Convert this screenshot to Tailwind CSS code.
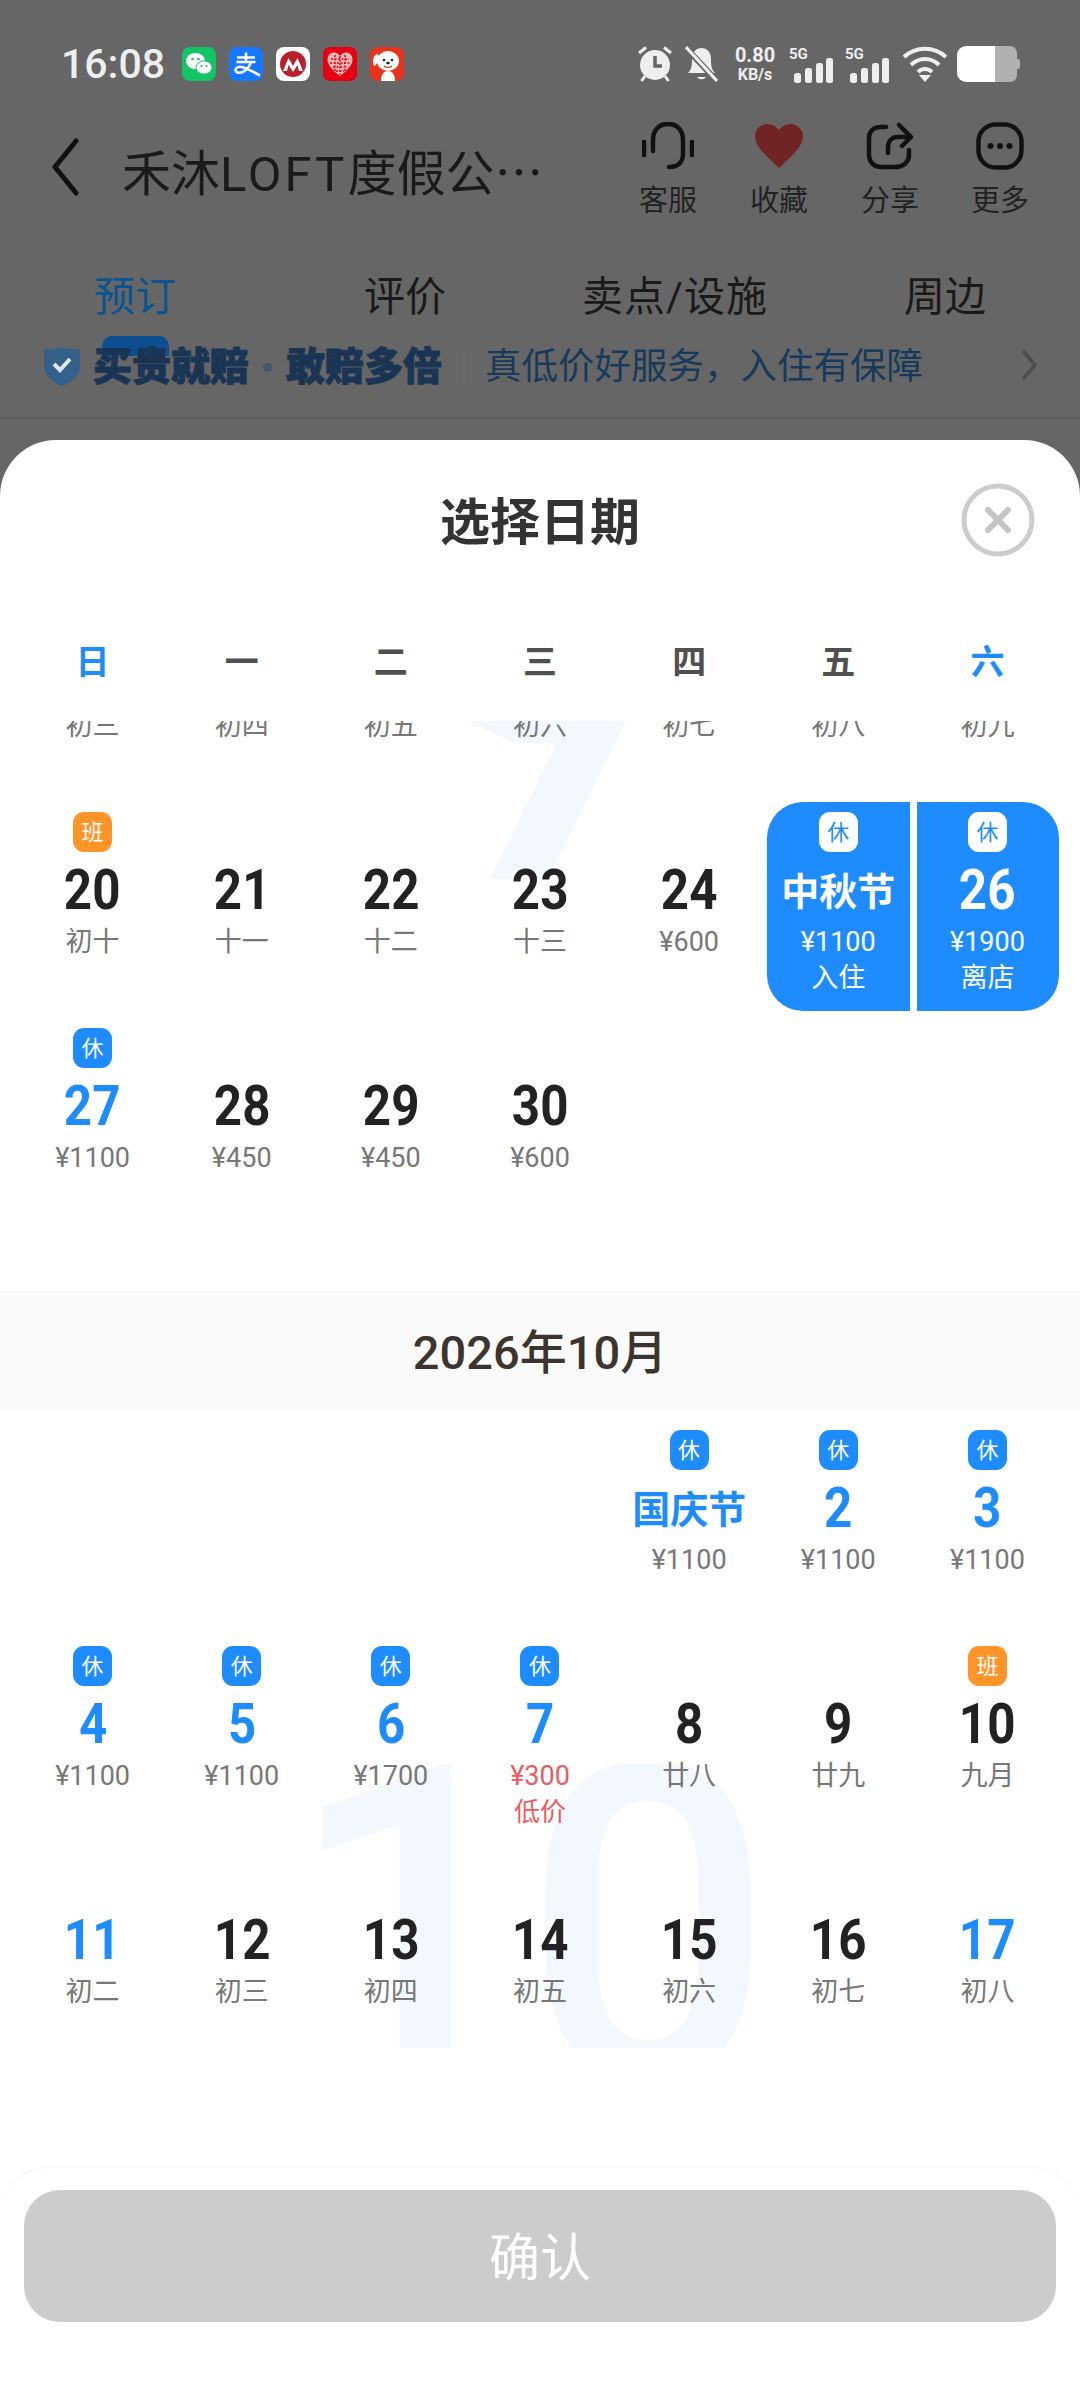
<!DOCTYPE html>
<html lang="zh-CN">
<head>
<meta charset="UTF-8">
<meta name="viewport" content="width=device-width, initial-scale=1.0">
<title>选择日期</title>
<script src="https://cdn.jsdelivr.net/npm/@tailwindcss/browser@4"></script>
</head>
<body class="w-[1080px] h-[2400px] overflow-hidden bg-[#666666] font-['Roboto','Noto_Sans_CJK_SC',sans-serif]">

<!-- page behind the sheet -->
<div class="h-[440px] flex flex-col">
  <!-- status bar -->
  <div class="h-[100px] pt-[46px] pl-[61px] flex items-start text-[#eeeeee]">
    <span class="w-[121px] h-9 leading-9 text-[41px] font-medium">16:08</span>
    <div class="flex gap-[13px] mt-px">
      <svg class="w-[34px] h-[34px]" viewBox="0 0 34 34"><rect width="34" height="34" rx="8" fill="#12c463"/><ellipse cx="13.5" cy="14" rx="9.5" ry="8" fill="#fff"/><ellipse cx="22" cy="20.5" rx="8" ry="6.6" fill="#fff" stroke="#12c463"/><circle cx="10.5" cy="12" r="1.3" fill="#12c463"/><circle cx="16.5" cy="12" r="1.3" fill="#12c463"/><circle cx="19.5" cy="19" r="1.1" fill="#12c463"/><circle cx="24.5" cy="19" r="1.1" fill="#12c463"/></svg>
      <svg class="w-[34px] h-[34px]" viewBox="0 0 34 34"><rect width="34" height="34" rx="8" fill="#1677ff"/><path d="M8 10.5H26M17 5.5V14M7.5 15H26.5M22 15C20 22 13 27 8.5 25.5C4.5 24 7 18.5 13 20C18 21.2 24 25 31 28.5" fill="none" stroke="#fff" stroke-width="2.6"/></svg>
      <svg class="w-[34px] h-[34px]" viewBox="0 0 34 34"><rect width="34" height="34" rx="8" fill="#fff"/><circle cx="17" cy="17" r="13" fill="#b8202c"/><path d="M7 24L12.500 11L17 19L21.500 11L27 24H23L21.500 18L17 25L12.500 18L11 24Z" fill="#fff"/></svg>
      <svg class="w-[34px] h-[34px]" viewBox="0 0 34 34"><rect width="34" height="34" rx="7" fill="#e60012"/><path d="M17 29C9 23 4.500 18 4.500 12.500C4.500 8 8 5.500 11 5.500C13.500 5.500 15.500 6.800 17 9C18.500 6.800 20.500 5.500 23 5.500C26 5.500 29.500 8 29.500 12.500C29.500 18 25 23 17 29Z" fill="#f6b6b6"/><path d="M8 12H26M7 16H27M10 20H24M13 24H21M12 8V24M17 9V28M22 8V24" stroke="#e60012" stroke-width="1.500" stroke-dasharray="2 1.500"/></svg>
      <svg class="w-[34px] h-[34px]" viewBox="0 0 34 34"><rect width="34" height="34" rx="8" fill="#e8341c"/><ellipse cx="18" cy="14" rx="11" ry="10" fill="#fff"/><path d="M8 7C3 8 2 14 4 19C7 18 8 14 9 11Z" fill="#fff"/><path d="M11 34C11 27 14 24 18 24C22 24 25 27 25 34Z" fill="#fff"/><circle cx="14" cy="13" r="1.300" fill="#222"/><circle cx="22" cy="13" r="1.300" fill="#222"/><ellipse cx="18" cy="16" rx="1.800" ry="1.300" fill="#222"/><path d="M14 19C16 21 20 21 22 19" stroke="#e8341c" stroke-width="1.200" fill="none"/></svg>
    </div>
    <div class="ml-[233px] flex items-start">
      <svg class="w-[36px] h-[36px]" viewBox="0 0 36 36"><path d="M2 7L9 1.500M34 7L27 1.500M8 30L4.500 35M28 30L31.500 35" stroke="#eee" stroke-width="3" fill="none"/><circle cx="18" cy="19" r="15" fill="#eee"/><path d="M18 10V20H25" stroke="#666" stroke-width="3.500" fill="none"/></svg>
      <svg class="ml-3 w-[33px] h-[36px]" viewBox="0 0 33 36"><path d="M3 27C7 23 7 18 7 13C7 6 11 2 16.500 2C22 2 26 6 26 13C26 18 26 23 30 27Z" fill="#eee"/><path d="M12 31C14 34 19 34 21 31Z" fill="#eee"/><path d="M1 2L32 35" stroke="#666" stroke-width="6"/><path d="M1 1L32 35" stroke="#eee" stroke-width="3"/></svg>
      <div class="ml-3 w-[50px] flex flex-col items-center font-bold leading-none -mt-px">
        <span class="h-[20px] text-[20px]">0.80</span>
        <span class="mt-[2px] text-[16px]">KB/s</span>
      </div>
      <div class="ml-[11px] w-[43px] flex flex-col">
        <span class="h-[13px] text-[15px] leading-[13px] font-bold ml-[-2px] mt-[2px]">5G</span>
        <svg class="w-[42px] h-[25px] mt-[-3px]" viewBox="0 0 42 25"><rect x="3" y="15" width="7" height="10" rx="2.500" fill="#eee"/><rect x="14" y="10" width="7" height="15" rx="2.500" fill="#eee"/><rect x="25" y="5" width="7" height="20" rx="2.500" fill="#eee"/><rect x="35" y="0" width="7" height="25" rx="2.500" fill="#eee"/></svg>
      </div>
      <div class="ml-[13px] w-[43px] flex flex-col">
        <span class="h-[13px] text-[15px] leading-[13px] font-bold ml-[-2px] mt-[2px]">5G</span>
        <svg class="w-[42px] h-[25px] mt-[-3px]" viewBox="0 0 42 25"><rect x="3" y="15" width="7" height="10" rx="2.500" fill="#eee"/><rect x="14" y="10" width="7" height="15" rx="2.500" fill="#eee"/><rect x="25" y="5" width="7" height="20" rx="2.500" fill="#eee"/><rect x="35" y="0" width="7" height="25" rx="2.500" fill="#eee"/></svg>
      </div>
      <svg class="ml-3 w-[46px] h-[36px]" viewBox="0 0 46 36"><path d="M2 11C14 0 32 0 44 11M9 19C17 11 29 11 37 19M16 26C20 22 26 22 30 26" fill="none" stroke="#eee" stroke-width="4"/><path d="M17 29H29L23 36Z" fill="#eee"/></svg>
      <div class="ml-[9px] w-[63px] h-[36px] flex items-center">
        <div class="w-[38px] h-full bg-white rounded-l-[9px]"></div>
        <div class="w-[22px] h-full bg-[#b0b0b0] rounded-r-[7px]"></div>
        <div class="w-[3px] h-[10px] bg-[#b0b0b0] rounded-r-[2px]"></div>
      </div>
    </div>
  </div>
  <!-- nav -->
  <div class="h-[120px] flex items-start">
    <svg class="ml-[50px] mt-[38px] w-[30px] h-[58px]" viewBox="0 0 30 58"><path d="M26 3L5 29L26 55" fill="none" stroke="#111" stroke-width="5" stroke-linecap="round" stroke-linejoin="round"/></svg>
    <span class="ml-[42px] mt-[40px] w-[420px] h-[60px] leading-[60px] text-[49px] text-[#1a1a1a] whitespace-nowrap">禾沐<span class="tracking-[3px]">LOFT</span>度假公<span class="font-['Noto_Sans_CJK_SC',sans-serif]">…</span></span>
    <div class="ml-[71px] flex mt-[22px] text-[#222222]">
      <div class="w-[110px] flex flex-col items-center">
        <svg class="w-[52px] h-[48px]" viewBox="0 0 52 48"><path d="M11 29V18C11 8 17 2 26 2C35 2 41 8 41 18V32C41 40 36 45 27 45" fill="none" stroke="#111" stroke-width="4.500" stroke-linecap="round"/><path d="M2 20V33M50 20V33" stroke="#111" stroke-width="4.500" stroke-linecap="round"/></svg>
        <span class="mt-[11px] h-10 leading-10 text-[29px]">客服</span>
      </div>
      <div class="w-[112px] flex flex-col items-center">
        <svg class="w-[50px] h-[48px]" viewBox="0 0 50 48"><path d="M25 46C10 32 1 24 1 14C1 7 7 2 13 2C18 2 22 4 25 8C28 4 32 2 37 2C43 2 49 7 49 14C49 24 40 32 25 46Z" fill="#702424"/></svg>
        <span class="mt-[11px] h-10 leading-10 text-[29px]">收藏</span>
      </div>
      <div class="w-[110px] flex flex-col items-center">
        <svg class="w-[48px] h-[48px]" viewBox="0 0 48 48"><path d="M20 5H15C8 5 3 9 3 16V33C3 40 8 45 15 45H30C37 45 43 40 43 33V28" fill="none" stroke="#111" stroke-width="4.500" stroke-linecap="round"/><path d="M22 31V25C22 19 26 15 32 15H44M33 3L45 15L36 24" fill="none" stroke="#111" stroke-width="4.500" stroke-linecap="round" stroke-linejoin="round"/></svg>
        <span class="mt-[11px] h-10 leading-10 text-[29px]">分享</span>
      </div>
      <div class="w-[110px] flex flex-col items-center">
        <svg class="w-[48px] h-[48px]" viewBox="0 0 48 48"><rect x="2.500" y="2.500" width="43" height="43" rx="17" fill="none" stroke="#111" stroke-width="4.500"/><circle cx="14.500" cy="24" r="3" fill="#111"/><circle cx="24" cy="24" r="3" fill="#111"/><circle cx="33.500" cy="24" r="3" fill="#111"/></svg>
        <span class="mt-[11px] h-10 leading-10 text-[29px]">更多</span>
      </div>
    </div>
  </div>
  <!-- tabs -->
  <div class="relative h-[125px] grid text-[41px] text-[#1a1a1a] grid-cols-[270px_270px_270px_270px] text-center">
    <span class="pt-[52px] leading-[50px] text-[#0a5490]">预订</span>
    <span class="pt-[52px] leading-[50px]">评价</span>
    <span class="pt-[52px] leading-[50px] tracking-[1px]">卖点/设施</span>
    <span class="pt-[52px] leading-[50px]">周边</span>
  </div>
</div>

<!-- bottom sheet -->
<div class="w-[1080px] h-[1960px] bg-white rounded-t-[56px] flex flex-col relative">
  <div class="h-[160px] pt-[6px] flex items-center justify-center text-[50px] font-bold text-[#333333]">选择日期</div>
  <svg class="absolute left-[961px] top-[43px] w-[74px] h-[74px]" viewBox="0 0 74 74"><circle cx="37" cy="37" r="34" fill="none" stroke="#cccccc" stroke-width="5"/><path d="M27 27L47 47M47 27L27 47" stroke="#c4c4c4" stroke-width="6" stroke-linecap="round"/></svg>

  <div class="h-[121px] px-[18px] pt-[41px] grid grid-cols-7 text-center text-[34px] leading-[42px] font-bold text-[#505050]">
    <span class="text-[#1e8cff]">日</span><span>一</span><span>二</span><span>三</span><span>四</span><span>五</span><span class="text-[#1e8cff]">六</span>
  </div>

  <div class="flex-1 overflow-hidden">
    <!-- September, scrolled part way -->
    <div class="relative h-[648px] -mt-[125px] px-[18px] grid grid-cols-7 auto-rows-[216px]">
      <svg class="absolute left-[465px] top-[125px] w-[170px] h-[158px]" viewBox="0 0 170 158"><path d="M3 0H161L83 158H25L92 22H50Z" fill="#f3f8fe"/></svg>
      <div class="relative flex flex-col items-center justify-end pb-[68px]"><div class="h-9 leading-9 text-[27px] text-[#777777]">初三</div></div>
      <div class="relative flex flex-col items-center justify-end pb-[68px]"><div class="h-9 leading-9 text-[27px] text-[#777777]">初四</div></div>
      <div class="relative flex flex-col items-center justify-end pb-[68px]"><div class="h-9 leading-9 text-[27px] text-[#777777]">初五</div></div>
      <div class="relative flex flex-col items-center justify-end pb-[68px]"><div class="h-9 leading-9 text-[27px] text-[#777777]">初六</div></div>
      <div class="relative flex flex-col items-center justify-end pb-[68px]"><div class="h-9 leading-9 text-[27px] text-[#777777]">初七</div></div>
      <div class="relative flex flex-col items-center justify-end pb-[68px]"><div class="h-9 leading-9 text-[27px] text-[#777777]">初八</div></div>
      <div class="relative flex flex-col items-center justify-end pb-[68px]"><div class="h-9 leading-9 text-[27px] text-[#777777]">初九</div></div>

      <div class="relative flex flex-col items-center"><div class="w-[39px] h-10 rounded-[11px] bg-[#ff9428] text-white text-[22px] flex items-center justify-center">班</div><div class="mt-2 h-14 text-[56px] leading-[60px] font-bold text-[#222222] scale-x-[.88]">20</div><div class="mt-2 h-9 leading-9 text-[27px] text-[#777777]">初十</div></div>
      <div class="relative flex flex-col items-center"><div class="h-10"></div><div class="mt-2 h-14 text-[56px] leading-[60px] font-bold text-[#222222] scale-x-[.88]">21</div><div class="mt-2 h-9 leading-9 text-[27px] text-[#777777]">十一</div></div>
      <div class="relative flex flex-col items-center"><div class="h-10"></div><div class="mt-2 h-14 text-[56px] leading-[60px] font-bold text-[#222222] scale-x-[.88]">22</div><div class="mt-2 h-9 leading-9 text-[27px] text-[#777777]">十二</div></div>
      <div class="relative flex flex-col items-center"><div class="h-10"></div><div class="mt-2 h-14 text-[56px] leading-[60px] font-bold text-[#222222] scale-x-[.88]">23</div><div class="mt-2 h-9 leading-9 text-[27px] text-[#777777]">十三</div></div>
      <div class="relative flex flex-col items-center"><div class="h-10"></div><div class="mt-2 h-14 text-[56px] leading-[60px] font-bold text-[#222222] scale-x-[.88]">24</div><div class="mt-2 h-9 leading-9 text-[27px] text-[#777777]">¥600</div></div>
      <div class="relative flex flex-col items-center"><div class="absolute left-[3px] right-[3px] -top-[10px] h-[209px] rounded-l-[36px] bg-[#1e8cff]"></div><div class="relative w-[39px] h-10 rounded-[11px] bg-white text-[#1e8cff] text-[22px] flex items-center justify-center">休</div><div class="relative mt-2 h-14 text-[38px] leading-[64px] font-bold text-white">中秋节</div><div class="relative mt-2 h-9 leading-9 text-[27px] text-white">¥1100</div><div class="relative h-9 leading-9 text-[27px] text-white">入住</div></div>
      <div class="relative flex flex-col items-center"><div class="absolute left-[4px] right-[3px] -top-[10px] h-[209px] rounded-r-[36px] bg-[#1e8cff]"></div><div class="relative w-[39px] h-10 rounded-[11px] bg-white text-[#1e8cff] text-[22px] flex items-center justify-center">休</div><div class="relative mt-2 h-14 text-[56px] leading-[60px] font-bold text-white scale-x-[.88]">26</div><div class="relative mt-2 h-9 leading-9 text-[27px] text-white">¥1900</div><div class="relative h-9 leading-9 text-[27px] text-white">离店</div></div>

      <div class="relative flex flex-col items-center"><div class="w-[39px] h-10 rounded-[11px] bg-[#1e8cff] text-white text-[22px] flex items-center justify-center">休</div><div class="mt-2 h-14 text-[56px] leading-[60px] font-bold text-[#1e8cff] scale-x-[.88]">27</div><div class="mt-2 h-9 leading-9 text-[27px] text-[#777777]">¥1100</div></div>
      <div class="relative flex flex-col items-center"><div class="h-10"></div><div class="mt-2 h-14 text-[56px] leading-[60px] font-bold text-[#222222] scale-x-[.88]">28</div><div class="mt-2 h-9 leading-9 text-[27px] text-[#777777]">¥450</div></div>
      <div class="relative flex flex-col items-center"><div class="h-10"></div><div class="mt-2 h-14 text-[56px] leading-[60px] font-bold text-[#222222] scale-x-[.88]">29</div><div class="mt-2 h-9 leading-9 text-[27px] text-[#777777]">¥450</div></div>
      <div class="relative flex flex-col items-center"><div class="h-10"></div><div class="mt-2 h-14 text-[56px] leading-[60px] font-bold text-[#222222] scale-x-[.88]">30</div><div class="mt-2 h-9 leading-9 text-[27px] text-[#777777]">¥600</div></div>
    </div>

    <div class="mt-[47px] h-[119px] pt-[6px] bg-[#fafafa] flex items-center justify-center text-[47px] font-medium text-[#3b352d]">2026年10月</div>

    <!-- October -->
    <div class="relative pt-5 px-[18px] grid grid-cols-7 auto-rows-[216px]">
      <div class="absolute left-[286px] top-[354px] w-[500px] h-[284px] overflow-hidden text-[440px] leading-[326px] font-medium text-[#f3f8fe] tracking-[-13px] whitespace-nowrap">10</div>

      <div></div><div></div><div></div><div></div>
      <div class="relative flex flex-col items-center"><div class="w-[39px] h-10 rounded-[11px] bg-[#1e8cff] text-white text-[22px] flex items-center justify-center">休</div><div class="mt-2 h-14 text-[38px] leading-[64px] font-bold text-[#1e8cff]">国庆节</div><div class="mt-2 h-9 leading-9 text-[27px] text-[#777777]">¥1100</div></div>
      <div class="relative flex flex-col items-center"><div class="w-[39px] h-10 rounded-[11px] bg-[#1e8cff] text-white text-[22px] flex items-center justify-center">休</div><div class="mt-2 h-14 text-[56px] leading-[60px] font-bold text-[#1e8cff] scale-x-[.88]">2</div><div class="mt-2 h-9 leading-9 text-[27px] text-[#777777]">¥1100</div></div>
      <div class="relative flex flex-col items-center"><div class="w-[39px] h-10 rounded-[11px] bg-[#1e8cff] text-white text-[22px] flex items-center justify-center">休</div><div class="mt-2 h-14 text-[56px] leading-[60px] font-bold text-[#1e8cff] scale-x-[.88]">3</div><div class="mt-2 h-9 leading-9 text-[27px] text-[#777777]">¥1100</div></div>

      <div class="relative flex flex-col items-center"><div class="w-[39px] h-10 rounded-[11px] bg-[#1e8cff] text-white text-[22px] flex items-center justify-center">休</div><div class="mt-2 h-14 text-[56px] leading-[60px] font-bold text-[#1e8cff] scale-x-[.88]">4</div><div class="mt-2 h-9 leading-9 text-[27px] text-[#777777]">¥1100</div></div>
      <div class="relative flex flex-col items-center"><div class="w-[39px] h-10 rounded-[11px] bg-[#1e8cff] text-white text-[22px] flex items-center justify-center">休</div><div class="mt-2 h-14 text-[56px] leading-[60px] font-bold text-[#1e8cff] scale-x-[.88]">5</div><div class="mt-2 h-9 leading-9 text-[27px] text-[#777777]">¥1100</div></div>
      <div class="relative flex flex-col items-center"><div class="w-[39px] h-10 rounded-[11px] bg-[#1e8cff] text-white text-[22px] flex items-center justify-center">休</div><div class="mt-2 h-14 text-[56px] leading-[60px] font-bold text-[#1e8cff] scale-x-[.88]">6</div><div class="mt-2 h-9 leading-9 text-[27px] text-[#777777]">¥1700</div></div>
      <div class="relative flex flex-col items-center"><div class="w-[39px] h-10 rounded-[11px] bg-[#1e8cff] text-white text-[22px] flex items-center justify-center">休</div><div class="mt-2 h-14 text-[56px] leading-[60px] font-bold text-[#1e8cff] scale-x-[.88]">7</div><div class="mt-2 h-9 leading-9 text-[27px] text-[#ee5a5f]">¥300</div><div class="h-9 leading-9 text-[26px] text-[#ee5a5f]">低价</div></div>
      <div class="relative flex flex-col items-center"><div class="h-10"></div><div class="mt-2 h-14 text-[56px] leading-[60px] font-bold text-[#222222] scale-x-[.88]">8</div><div class="mt-2 h-9 leading-9 text-[27px] text-[#777777]">廿八</div></div>
      <div class="relative flex flex-col items-center"><div class="h-10"></div><div class="mt-2 h-14 text-[56px] leading-[60px] font-bold text-[#222222] scale-x-[.88]">9</div><div class="mt-2 h-9 leading-9 text-[27px] text-[#777777]">廿九</div></div>
      <div class="relative flex flex-col items-center"><div class="w-[39px] h-10 rounded-[11px] bg-[#ff9428] text-white text-[22px] flex items-center justify-center">班</div><div class="mt-2 h-14 text-[56px] leading-[60px] font-bold text-[#222222] scale-x-[.88]">10</div><div class="mt-2 h-9 leading-9 text-[27px] text-[#777777]">九月</div></div>

      <div class="relative flex flex-col items-center"><div class="h-10"></div><div class="mt-2 h-14 text-[56px] leading-[60px] font-bold text-[#1e8cff] scale-x-[.88]">11</div><div class="mt-2 h-9 leading-9 text-[27px] text-[#777777]">初二</div></div>
      <div class="relative flex flex-col items-center"><div class="h-10"></div><div class="mt-2 h-14 text-[56px] leading-[60px] font-bold text-[#222222] scale-x-[.88]">12</div><div class="mt-2 h-9 leading-9 text-[27px] text-[#777777]">初三</div></div>
      <div class="relative flex flex-col items-center"><div class="h-10"></div><div class="mt-2 h-14 text-[56px] leading-[60px] font-bold text-[#222222] scale-x-[.88]">13</div><div class="mt-2 h-9 leading-9 text-[27px] text-[#777777]">初四</div></div>
      <div class="relative flex flex-col items-center"><div class="h-10"></div><div class="mt-2 h-14 text-[56px] leading-[60px] font-bold text-[#222222] scale-x-[.88]">14</div><div class="mt-2 h-9 leading-9 text-[27px] text-[#777777]">初五</div></div>
      <div class="relative flex flex-col items-center"><div class="h-10"></div><div class="mt-2 h-14 text-[56px] leading-[60px] font-bold text-[#222222] scale-x-[.88]">15</div><div class="mt-2 h-9 leading-9 text-[27px] text-[#777777]">初六</div></div>
      <div class="relative flex flex-col items-center"><div class="h-10"></div><div class="mt-2 h-14 text-[56px] leading-[60px] font-bold text-[#222222] scale-x-[.88]">16</div><div class="mt-2 h-9 leading-9 text-[27px] text-[#777777]">初七</div></div>
      <div class="relative flex flex-col items-center"><div class="h-10"></div><div class="mt-2 h-14 text-[56px] leading-[60px] font-bold text-[#1e8cff] scale-x-[.88]">17</div><div class="mt-2 h-9 leading-9 text-[27px] text-[#777777]">初八</div></div>
    </div>
  </div>

  <div class="h-[234px] rounded-t-[50px] border-t-2 border-[#f8f8f8] px-6 pt-[22px]">
    <div class="h-[132px] pt-[6px] rounded-[36px] bg-[#cccccc] flex items-center justify-center text-[51px] text-white">确认</div>
  </div>
</div>

<!-- promo banner sits under the tabs; indicator pokes through it -->
<div class="absolute left-0 top-[339px] w-[1080px] h-[80px] border-b-2 border-[#5f5f5f]">
  <div class="absolute left-[102px] -top-[3px] w-[67px] h-[20px] rounded-t-[10px] bg-[#0b4f8f]"></div>
  <div class="relative flex items-center h-[56px] pl-[43px] text-[#173a5a]">
    <svg class="w-[38px] h-[40px] -mt-[3px]" viewBox="0 0 38 40"><path d="M1 3C8 4 12 3 19 1C26 3 30 4 37 3V21C37 30 28 36 19 40C10 36 1 30 1 21Z" fill="#34608c"/><path d="M11 18L17 24L27 13" fill="none" stroke="#dfe7ee" stroke-width="4"/></svg>
    <span class="ml-[12px] text-[39px] font-black leading-[56px] text-[#1a3554] whitespace-nowrap [-webkit-text-stroke:1px_#1a3554]">买贵就赔</span>
    <span class="w-[37px] flex justify-center"><span class="w-[9px] h-[9px] rounded-full bg-[#3f5870]"></span></span>
    <span class="text-[39px] font-black leading-[56px] text-[#1a3554] whitespace-nowrap [-webkit-text-stroke:1px_#1a3554]">敢赔多倍</span>
    <span class="ml-[21px] w-[2px] h-[36px] bg-[#5f6a72]"></span>
    <span class="ml-[20px] text-[36.5px] leading-[56px] whitespace-nowrap">真低价好服务，入住有保障</span>
    <svg class="absolute left-[1022px] top-[11px] w-[15px] h-[30px]" viewBox="0 0 15 30"><path d="M2 2L13 15L2 28" fill="none" stroke="#4d4d4d" stroke-width="3.500" stroke-linecap="round"/></svg>
  </div>
</div>
</body>
</html>
